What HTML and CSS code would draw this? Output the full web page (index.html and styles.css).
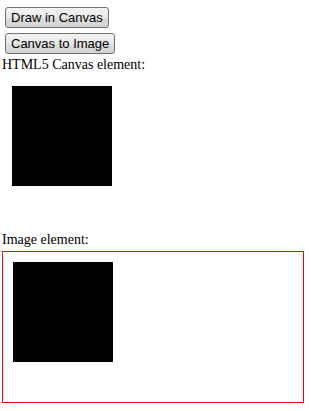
FILE: index.html
```html
<!DOCTYPE html>
<html lang="en">
<head>
    <meta charset="utf-8">
    <title>Canvas to Image</title>
    <link rel="stylesheet" href="styles.css">
</head>
<body>
    <button type="button" class="btn" id="draw">Draw in Canvas</button>
    <button type="button" class="btn" id="convert">Canvas to Image</button>

    <div class="label">HTML5 Canvas element:</div>
    <div class="canvas-box">
        <div class="square"></div>
    </div>

    <div class="label label-image">Image element:</div>
    <div class="image-box">
        <div class="square"></div>
    </div>
</body>
</html>
```

FILE: styles.css
```css
* {
    box-sizing: border-box;
}

body {
    margin: 0;
    padding: 7px 0 0 2px;
    font-family: 'Liberation Serif', 'Times New Roman', serif;
    font-size: 14px;
    color: #000;
    background: #fff;
}

.btn {
    display: block;
    height: 21px;
    margin: 0 0 5px 3px;
    padding: 0 5px;
    font-family: 'Liberation Sans', Arial, sans-serif;
    font-size: 13px;
    color: #000;
    background: linear-gradient(#f4f4f4, #e8e8e8 50%, #dcdcdc 51%, #d4d4d4);
    border: 1px solid #707070;
    border-radius: 3px;
}

.label {
    margin-top: -2px;
    line-height: 16px;
}

.canvas-box {
    width: 300px;
    height: 150px;
    margin-top: 3px;
    padding: 10px;
}

.label-image {
    margin-top: 6px;
}

.image-box {
    width: 302px;
    height: 152px;
    margin-top: 3px;
    padding: 10px;
    border: 1px solid #f00;
}

.square {
    width: 100px;
    height: 100px;
    background: #000;
}
```
